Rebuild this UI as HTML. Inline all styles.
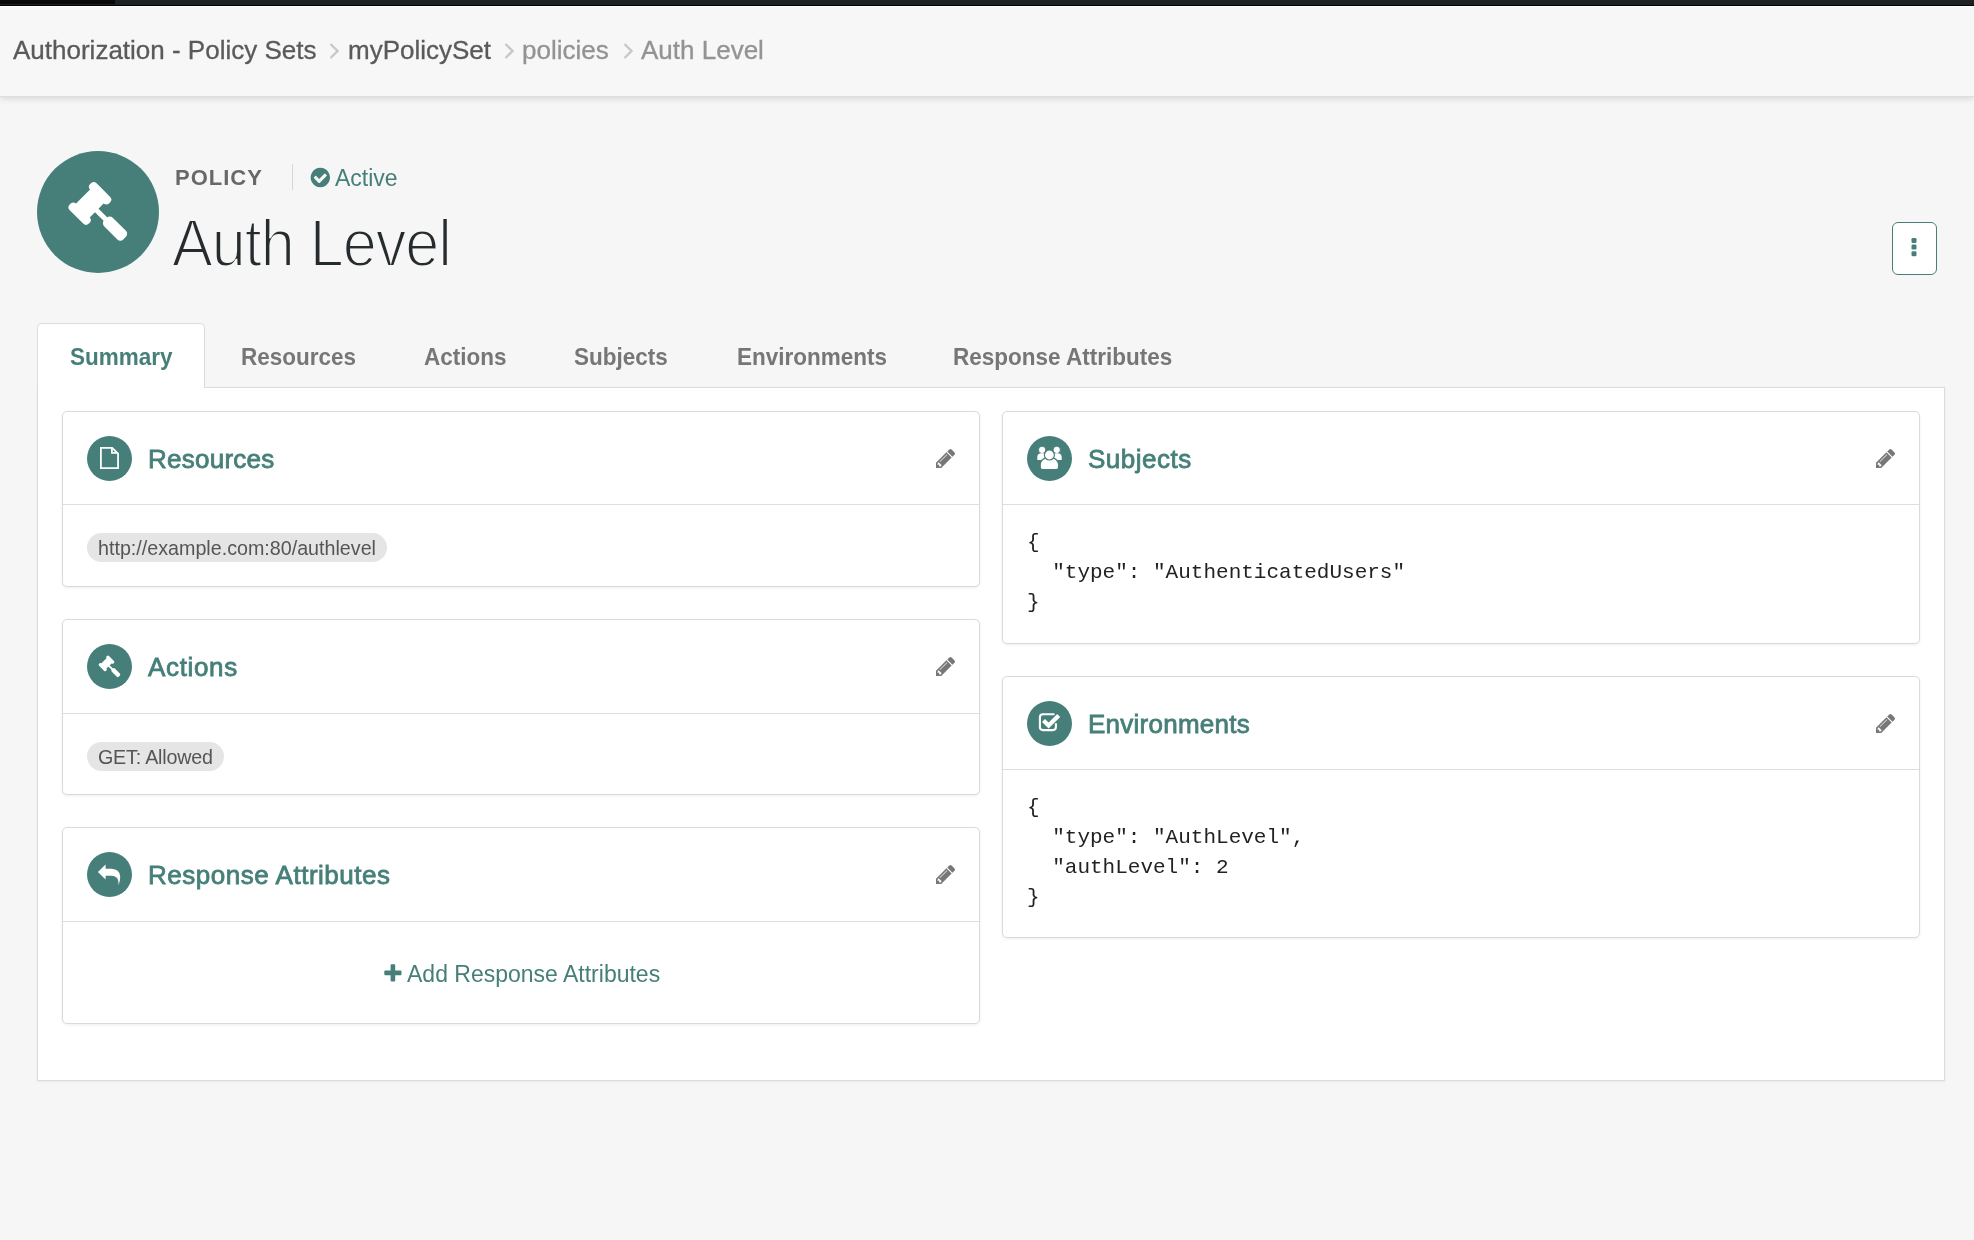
<!DOCTYPE html>
<html><head><meta charset="utf-8">
<style>
*{box-sizing:border-box;margin:0;padding:0}
html,body{width:1974px;height:1240px;overflow:hidden;will-change:transform;background:#f6f6f6;font-family:"Liberation Sans",sans-serif}
.abs{position:absolute}
#topbar{left:0;top:0;width:1974px;height:6px;background:#1f2224;border-bottom:1px solid #000}
#topbar .prog{left:0;top:0;width:115px;height:4px;background:#080a0a}
#hdr{left:0;top:6px;width:1974px;height:91px;background:#f7f7f7;box-shadow:0 2px 6px rgba(0,0,0,.12);border-top:1px solid #fff;border-bottom:1px solid #dedede}
.bc{position:absolute;font-size:26px;line-height:1;white-space:nowrap;-webkit-text-stroke:.3px currentColor}
.chev{position:absolute}
#policy{left:175px;top:167px;font-size:22px;font-weight:bold;color:#686868;letter-spacing:1px;line-height:1}
#sep{left:292px;top:164px;width:1px;height:26px;background:#d6d6d6}
#active{left:335px;top:167px;font-size:23px;color:#467f79;line-height:1}
#title{left:172px;top:210px;font-size:66px;letter-spacing:-1.1px;color:#262b2e;line-height:1;white-space:nowrap;transform-origin:0 0;transform:scaleX(.927);-webkit-text-stroke:2px #f6f6f6}
#kebab{left:1892px;top:222px;width:45px;height:53px;border:1.5px solid #467f79;border-radius:6px;background:#fff}
#panel{left:37px;top:387px;width:1908px;height:694px;background:#fff;border:1px solid #dcdcdc;box-shadow:0 1px 2px rgba(0,0,0,.06)}
#tabact{left:37px;top:323px;width:168px;height:65px;background:#fff;border:1px solid #dcdcdc;border-bottom:none;border-radius:5px 5px 0 0}
.tab{position:absolute;top:345px;font-size:24px;transform-origin:0 0;transform:scaleX(.9375);font-weight:bold;color:#767676;line-height:1;white-space:nowrap}
.card{position:absolute;background:#fff;border:1px solid #dadada;border-radius:5px;box-shadow:0 1px 3px rgba(0,0,0,.07)}
.card .hd{position:absolute;left:0;right:0;top:0;height:93px;border-bottom:1px solid #dedede}
.card .ic{position:absolute;left:24px;top:24px;width:45px;height:45px}
.card .ttl{position:absolute;left:85px;top:34px;font-size:26px;color:#467f79;line-height:1;white-space:nowrap;-webkit-text-stroke:.8px #467f79}
.pen{position:absolute;top:37px;right:24px;width:19px;height:19px}
.pill{position:absolute;left:24px;background:#e5e5e5;border-radius:15px;height:29px;font-size:19.7px;color:#555;line-height:30px;padding:0 11px;white-space:nowrap}
pre{position:absolute;left:24px;font-family:"Liberation Mono",monospace;font-size:21px;line-height:30px;color:#222}
</style></head><body>
<svg width="0" height="0" style="position:absolute">
 <defs>
  <symbol id="gavel" viewBox="-61 -61 122 122">
   <circle cx="0" cy="0" r="61" fill="#467f79"/>
   <g transform="translate(0.1,-0.55) scale(1.046) translate(-0.1,0.9)"><g transform="translate(-7.8,-8.5) rotate(45)" fill="#fff">
    <rect x="-9.3" y="-13" width="18.7" height="26" />
    <rect x="-12.9" y="-18.2" width="25.8" height="8.7" rx="3.8"/>
    <rect x="-12.9" y="9.5" width="25.8" height="8.6" rx="3.8"/>
    <rect x="8" y="-2.4" width="15" height="4.8"/>
    <rect x="21" y="-5.9" width="25.9" height="11.6" rx="4"/>
   </g></g>
  </symbol>
  <symbol id="pencil" viewBox="0 149 1515 1515">
   <path fill="#777" fill-rule="evenodd" d="M363 1536l91-91-235-235-91 91v107h128v128h107zm523-928q0-22-22-22-10 0-17 7l-542 542q-7 7-7 17 0 22 22 22 10 0 17-7l542-542q7-7 7-17zm-54-192l416 416-832 832h-416v-416zm683 96q0 53-37 90l-166 166-416-416 166-165q36-38 90-38 53 0 91 38l235 234q37 39 37 91z"/>
  </symbol>
 </defs>
</svg>
<div id="topbar" class="abs"><div class="prog abs"></div></div>
<div id="hdr" class="abs">
  <span class="bc" style="left:13px;top:30px;color:#5a5a5a">Authorization - Policy Sets</span>
  <svg class="chev" style="left:329.3px;top:35.6px" width="10" height="16" viewBox="0 0 10 16"><polyline points="1.5,1 8.5,8 1.5,15" fill="none" stroke="#c8c8c8" stroke-width="2.3"/></svg>
  <span class="bc" style="left:348px;top:30px;color:#5a5a5a">myPolicySet</span>
  <svg class="chev" style="left:504.3px;top:35.6px" width="10" height="16" viewBox="0 0 10 16"><polyline points="1.5,1 8.5,8 1.5,15" fill="none" stroke="#c8c8c8" stroke-width="2.3"/></svg>
  <span class="bc" style="left:522px;top:30px;color:#939393">policies</span>
  <svg class="chev" style="left:623.3px;top:35.6px" width="10" height="16" viewBox="0 0 10 16"><polyline points="1.5,1 8.5,8 1.5,15" fill="none" stroke="#c8c8c8" stroke-width="2.3"/></svg>
  <span class="bc" style="left:641px;top:30px;color:#939393">Auth Level</span>
</div>

<svg class="abs" style="left:37px;top:151px" width="122" height="122"><use href="#gavel"/></svg>
<div id="policy" class="abs">POLICY</div>
<div id="sep" class="abs"></div>
<svg class="abs" style="left:308.5px;top:166.5px" width="21" height="21" viewBox="0 64 1664 1664"><path fill="#467f79" d="M1412 734q0-28-18-46l-91-90q-19-19-45-19t-45 19l-408 407-226-226q-19-19-45-19t-45 19l-91 90q-18 18-18 46 0 27 18 45l362 362q19 19 45 19 27 0 46-19l543-543q18-18 18-45zm252 162q0 209-103 385.5t-279.5 279.5-385.5 103-385.5-103-279.5-279.5-103-385.5 103-385.5 279.5-279.5 385.5-103 385.5 103 279.5 279.5 103 385.5z"/></svg>
<div id="active" class="abs">Active</div>
<div id="title" class="abs">Auth Level</div>
<div id="kebab" class="abs">
  <svg class="abs" style="left:18px;top:13.8px" width="6" height="20" viewBox="0 0 6 20"><rect x=".5" y="1" width="5" height="5" rx="1.3" fill="#467f79"/><rect x=".5" y="7.6" width="5" height="5" rx="1.3" fill="#467f79"/><rect x=".5" y="14.2" width="5" height="5" rx="1.3" fill="#467f79"/></svg>
</div>

<div id="panel" class="abs"></div>
<div id="tabact" class="abs"></div>
<span class="tab" style="left:70px;color:#467f79">Summary</span>
<span class="tab" style="left:241px">Resources</span>
<span class="tab" style="left:424px">Actions</span>
<span class="tab" style="left:574px">Subjects</span>
<span class="tab" style="left:737px">Environments</span>
<span class="tab" style="left:953px">Response Attributes</span>

<div class="card" style="left:62px;top:411px;width:918px;height:176px">
  <div class="hd">
    <svg class="ic" viewBox="0 0 45 45"><circle cx="22.5" cy="22.5" r="22.5" fill="#467f79"/><path d="M13.9 11.8H25.2L31.05 17.6V32.2H13.9Z M24.9 11.8V16.9H31.05" fill="none" stroke="#fff" stroke-width="1.8" stroke-linejoin="miter"/></svg>
    <div class="ttl" style="letter-spacing:.25px">Resources</div>
    <svg class="pen"><use href="#pencil"/></svg>
  </div>
  <div class="pill" style="top:121px">http://example.com:80/authlevel</div>
</div>
<div class="card" style="left:62px;top:619px;width:918px;height:176px">
  <div class="hd" style="height:94px">
    <svg class="ic"><use href="#gavel"/></svg>
    <div class="ttl" style="letter-spacing:.65px">Actions</div>
    <svg class="pen"><use href="#pencil"/></svg>
  </div>
  <div class="pill" style="top:122px;letter-spacing:-.2px">GET: Allowed</div>
</div>
<div class="card" style="left:62px;top:827px;width:918px;height:197px">
  <div class="hd" style="height:94px">
    <svg class="ic" viewBox="0 0 45 45"><circle cx="22.5" cy="22.5" r="22.5" fill="#467f79"/><g transform="translate(-2,-1.5)"><path fill="#fff" d="M12.9 21.6L20.6 14.1V18.3H24.5C31 18.3 35.2 20.5 35.2 26.5C35.2 29.5 34.2 32.5 33.5 34.7C33.7 31.5 33.5 29 31.5 27C30 25.6 27.5 25.2 24.5 25.2H20.6V29Z"/></g></svg>
    <div class="ttl" style="letter-spacing:.52px">Response Attributes</div>
    <svg class="pen"><use href="#pencil"/></svg>
  </div>
  <svg class="abs" style="left:320.5px;top:135.5px" width="18" height="18" viewBox="0 0 18 18"><path d="M6.6 1.2Q6.6 .3 7.5 .3H10.3Q11.2 .3 11.2 1.2V6.6H16.6Q17.5 6.6 17.5 7.5V10.3Q17.5 11.2 16.6 11.2H11.2V16.6Q11.2 17.5 10.3 17.5H7.5Q6.6 17.5 6.6 16.6V11.2H1.2Q.3 11.2 .3 10.3V7.5Q.3 6.6 1.2 6.6H6.6Z" fill="#467f79"/></svg>
  <div class="abs" style="left:344px;top:135px;font-size:23px;line-height:1;color:#467f79;white-space:nowrap">Add Response Attributes</div>
</div>
<div class="card" style="left:1002px;top:411px;width:918px;height:233px">
  <div class="hd">
    <svg class="ic" viewBox="0 0 45 45"><circle cx="22.5" cy="22.5" r="22.5" fill="#467f79"/><g transform="translate(-2,-1.8)" fill="#fff" stroke="#467f79" stroke-width="1">
<circle cx="17.1" cy="15.7" r="3.7"/><circle cx="31.7" cy="15.7" r="3.7"/>
<path d="M12.3 25.8V22.5C12.3 20 14.5 19 16.5 19H18C20 19 21.5 20 21.5 22.5V25.8Z" stroke="none"/>
<path d="M27.3 25.8V22.5C27.3 20 28.8 19 30.8 19H32.5C34.5 19 36.7 20 36.7 22.5V25.8Z" stroke="none"/>
<path d="M15.2 32.2V30.5C15.2 26.5 18.5 24 21 24H27.8C30.3 24 33.6 26.5 33.6 30.5V32.2C33.6 34.2 32.6 35.5 30.6 35.5H18.2C16.2 35.5 15.2 34.2 15.2 32.2Z" stroke-width="1.2"/>
<circle cx="24.4" cy="20.8" r="5" stroke-width="1.2"/>
</g></svg>
    <div class="ttl" style="letter-spacing:.5px">Subjects</div>
    <svg class="pen"><use href="#pencil"/></svg>
  </div>
  <pre style="top:116px">{
  "type": "AuthenticatedUsers"
}</pre>
</div>
<div class="card" style="left:1002px;top:676px;width:918px;height:262px">
  <div class="hd">
    <svg class="ic" viewBox="0 0 45 45"><circle cx="22.5" cy="22.5" r="22.5" fill="#467f79"/><g transform="translate(-2,-1.9)" fill="none" stroke="#fff">
<path d="M29.5 15.1H17.9C16.1 15.1 14.9 16.3 14.9 18.1V28C14.9 29.8 16.1 31 17.9 31H27.9C29.7 31 30.9 29.8 30.9 28V24.2" stroke-width="2.1"/>
<polyline points="18.5,21.3 23.6,26.4 33.7,16.3" stroke-width="4.2" stroke-linejoin="miter" stroke-miterlimit="10"/>
</g></svg>
    <div class="ttl" style="letter-spacing:.25px">Environments</div>
    <svg class="pen"><use href="#pencil"/></svg>
  </div>
  <pre style="top:116px">{
  "type": "AuthLevel",
  "authLevel": 2
}</pre>
</div>
</body></html>
